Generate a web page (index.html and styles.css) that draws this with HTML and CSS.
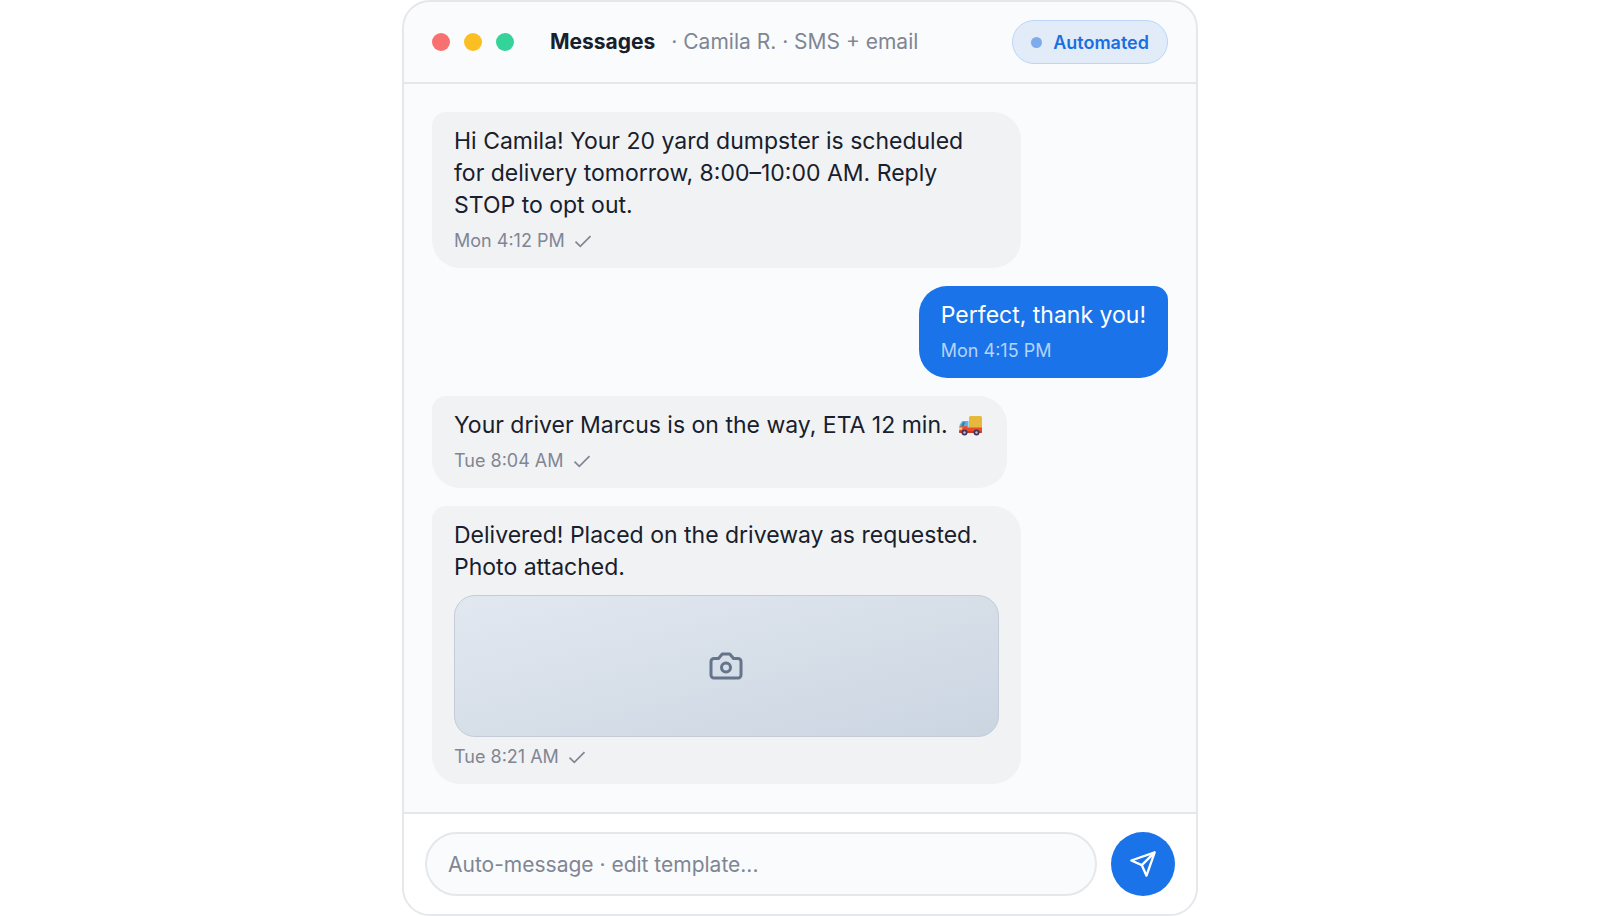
FILE: index.html
```
<!DOCTYPE html>
<html lang="en">
<head>
<meta charset="utf-8">
<meta name="viewport" content="width=device-width, initial-scale=1">
<title>Messages</title>
<link rel="stylesheet" href="styles.css">
</head>
<body>
<main class="card">
  <header class="card-header">
    <span class="dots"><span class="dot dot-red"></span><span class="dot dot-amber"></span><span class="dot dot-green"></span></span>
    <h1 class="title">Messages</h1>
    <p class="subtitle">· Camila R. · SMS + email</p>
    <span class="pill">Automated</span>
  </header>
  <section class="thread" aria-label="Conversation">
    <article class="bubble">
      <p class="text">Hi Camila! Your 20 yard dumpster is scheduled for delivery tomorrow, 8:00–10:00 AM. Reply STOP to opt out.</p>
      <p class="meta">Mon 4:12 PM <svg class="check" viewBox="0 0 18 18" aria-hidden="true"><path d="M1.5 9.7 6.3 14.3 16.5 4.2"/></svg></p>
    </article>
    <article class="bubble bubble-out">
      <p class="text">Perfect, thank you!</p>
      <p class="meta">Mon 4:15 PM</p>
    </article>
    <article class="bubble">
      <p class="text">Your driver Marcus is on the way, ETA 12 min.
        <svg class="truck" viewBox="0 0 26 22" role="img" aria-label="Delivery truck">
          <rect x="11" y="1" width="13" height="13" rx="1.5" fill="#e6b83c"/>
          <path d="M4.2 6h6.3v7H1.6V10z" fill="#5fb4df"/>
          <path d="M5 7.2h2.5L5.8 11H3.2z" fill="#367fae"/>
          <path d="M1.5 11.5 9 11v1.5h15v5H1z" fill="#ee4c25"/>
          <path d="M1 12.5h3.2v2.2H1z" fill="#ffd27d"/>
          <rect x="1" y="16" width="23" height="2" rx="1" fill="#c93a2c"/>
          <circle cx="6.5" cy="17.5" r="3" fill="#40345b"/><circle cx="6.5" cy="17.5" r="1.2" fill="#c4bfd2"/>
          <circle cx="18.5" cy="17.5" r="3" fill="#40345b"/><circle cx="18.5" cy="17.5" r="1.2" fill="#c4bfd2"/>
        </svg></p>
      <p class="meta">Tue 8:04 AM <svg class="check" viewBox="0 0 18 18" aria-hidden="true"><path d="M1.5 9.7 6.3 14.3 16.5 4.2"/></svg></p>
    </article>
    <article class="bubble">
      <p class="text">Delivered! Placed on the driveway as requested. Photo attached.</p>
      <div class="photo">
        <svg class="camera" viewBox="0 0 24 24" role="img" aria-label="Photo"><path d="M14.5 4h-5L7 7H4a2 2 0 0 0-2 2v9a2 2 0 0 0 2 2h16a2 2 0 0 0 2-2V9a2 2 0 0 0-2-2h-3z"/><circle cx="12" cy="13" r="3"/></svg>
      </div>
      <p class="meta">Tue 8:21 AM <svg class="check" viewBox="0 0 18 18" aria-hidden="true"><path d="M1.5 9.7 6.3 14.3 16.5 4.2"/></svg></p>
    </article>
  </section>
  <form class="composer">
    <input class="field" type="text" aria-label="Message" placeholder="Auto-message · edit template...">
    <button class="send" type="button" aria-label="Send"><svg viewBox="0 0 24 24" aria-hidden="true"><path d="M22 2 11 13M22 2l-7 20-4-9-9-4z"/></svg></button>
  </form>
</main>
</body>
</html>
```
FILE: styles.css
```
* { box-sizing: border-box; }
body {
  margin: 0;
  background: #fff;
  color: #17202c;
  font-family: Inter, "Liberation Sans", sans-serif;
}
h1, p { margin: 0; }
.card {
  display: flex;
  flex-direction: column;
  width: 100%;
  max-width: 796px;
  min-height: 100vh;
  margin: 0 auto;
  border: 2px solid #e5e7eb;
  border-radius: 28px;
  background: #fafbfd;
  overflow: hidden;
}
.card-header {
  display: flex;
  align-items: center;
  padding: 18px 28px;
  border-bottom: 2px solid #e5e7eb;
}
.dots { display: flex; gap: 14px; margin-right: 36px; }
.dot { width: 18px; height: 18px; border-radius: 50%; }
.dot-red { background: #f87171; }
.dot-amber { background: #fbbf24; }
.dot-green { background: #34d399; }
.title { margin-right: 16px; font-size: 21px; line-height: 28px; font-weight: 700; }
.subtitle { color: #7f8694; font-size: 21px; line-height: 28px; }
.pill {
  display: flex;
  align-items: center;
  gap: 11px;
  height: 44px;
  margin-left: auto;
  padding: 0 18px;
  border: 1px solid #bcd5f7;
  border-radius: 22px;
  background: #e2ebf8;
  color: #1a6fe0;
  font-size: 18px;
  font-weight: 600;
}
.pill::before { content: ""; width: 11px; height: 11px; border-radius: 50%; background: #7eabec; }
.thread {
  display: flex;
  flex: 1;
  flex-direction: column;
  align-items: flex-start;
  gap: 18px;
  padding: 28px;
}
.bubble {
  max-width: 80%;
  padding: 13px 22px 14px;
  border-radius: 14px 28px 28px 28px;
  background: #f1f2f4;
}
.bubble-out {
  align-self: flex-end;
  border-radius: 28px 14px 28px 28px;
  background: #1a73e8;
  color: #fff;
}
.text { font-size: 23px; line-height: 32px; }
.meta {
  display: flex;
  align-items: center;
  gap: 9px;
  margin-top: 6px;
  color: #7f8694;
  font-size: 18px;
  line-height: 27px;
}
.bubble-out .meta { color: #b5d3fa; }
.check { width: 18px; height: 18px; fill: none; stroke: currentColor; stroke-width: 1.7; }
.truck { width: 26px; height: 22px; margin: 0 1px 0 4px; vertical-align: -4px; }
.photo {
  display: flex;
  align-items: center;
  justify-content: center;
  height: 142px;
  margin-top: 12px;
  border: 1px solid #c5ccd7;
  border-radius: 21px;
  background: linear-gradient(to bottom right, #e2e8f0, #cbd5e1);
}
.camera { width: 36px; height: 36px; fill: none; stroke: #64748b; stroke-width: 2; stroke-linejoin: round; }
.composer {
  display: flex;
  gap: 14px;
  padding: 18px 21px;
  border-top: 2px solid #e5e7eb;
  background: #fff;
}
.field {
  flex: 1;
  min-width: 0;
  height: 64px;
  padding: 0 21px;
  border: 2px solid #e5e7eb;
  border-radius: 32px;
  background: #fafbfd;
  color: #17202c;
  font: 21px Inter, "Liberation Sans", sans-serif;
}
.field::placeholder { color: #7f8694; opacity: 1; }
.send {
  display: flex;
  align-items: center;
  justify-content: center;
  width: 64px;
  height: 64px;
  padding: 0;
  border: 0;
  border-radius: 50%;
  background: #1a73e8;
}
.send svg { width: 28px; height: 28px; fill: none; stroke: #fff; stroke-width: 2; stroke-linecap: round; stroke-linejoin: round; }
```
